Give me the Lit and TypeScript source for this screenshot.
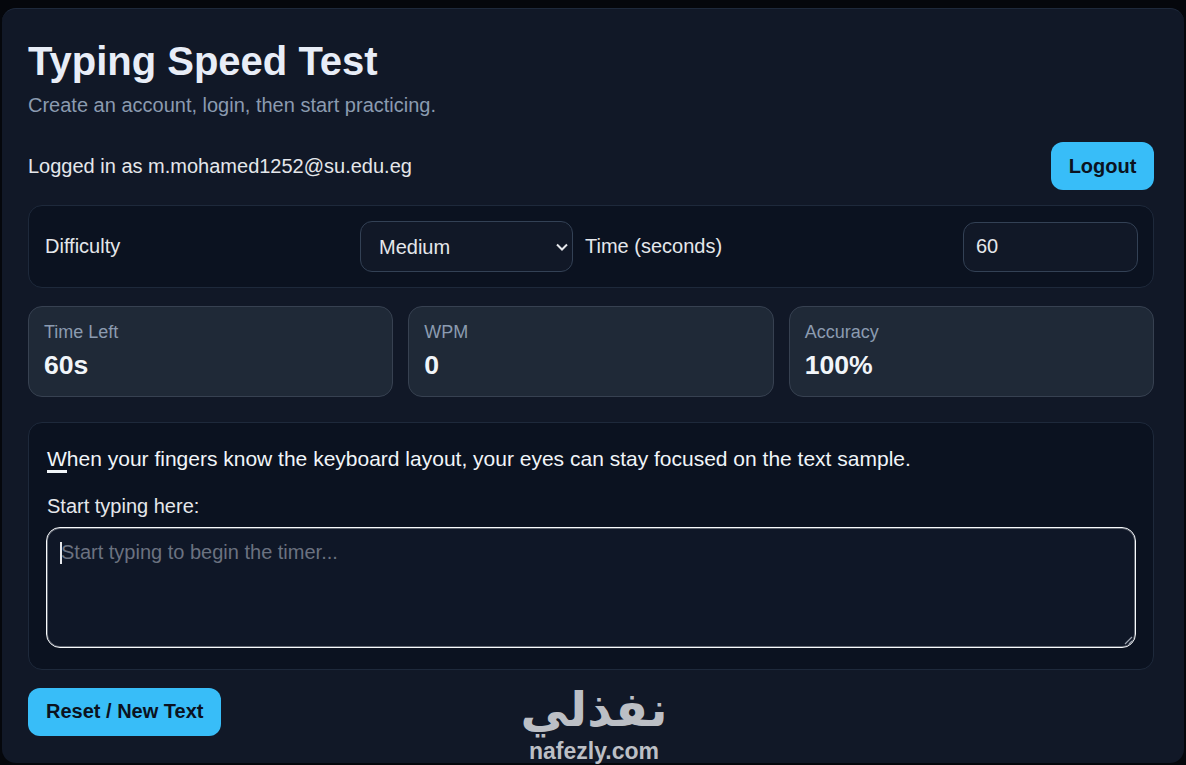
import { LitElement, html, css } from 'lit';
import { customElement, state } from 'lit/decorators.js';

@customElement('app-root')
export class AppRoot extends LitElement {
  @state() private sample = 'When your fingers know the keyboard layout, your eyes can stay focused on the text sample.';

  static styles = css`
    :host {
      display: block;
      height: 765px;
      box-sizing: border-box;
      padding: 8px 2px 2px;
      background: #05070c;
      color-scheme: dark;
      font-family: 'Liberation Sans', Arial, sans-serif;
      color: #e5e7eb;
      overflow: hidden;
    }
    * { box-sizing: border-box; }

    .card {
      position: relative;
      height: 755px;
      padding: 30px 30px 0 26px;
      background: #111827;
      border-top: 1px solid #1e293b;
      border-radius: 14px;
    }
    h1 {
      margin: 0;
      font-size: 40px;
      line-height: 44px;
      font-weight: 700;
      color: #e8edf7;
    }
    .subtitle {
      margin: 10px 0 0;
      font-size: 20px;
      line-height: 24px;
      color: #8b9bb0;
    }
    .user-row {
      display: flex;
      justify-content: space-between;
      align-items: center;
      margin-top: 25px;
      font-size: 20px;
    }
    button {
      height: 48px;
      padding: 0 18px;
      border: 0;
      border-radius: 12px;
      background: #38bdf8;
      color: #0b1220;
      font: 700 20px 'Liberation Sans', Arial, sans-serif;
    }
    .logout { width: 103px; padding: 0; }

    .settings {
      display: grid;
      grid-template-columns: 303px 213px 366px 175px;
      gap: 12px;
      align-items: center;
      height: 83px;
      margin-top: 15px;
      padding: 0 16px;
      background: #0b1220;
      border: 1px solid #1e293b;
      border-radius: 14px;
      font-size: 20px;
    }
    .select-wrap { position: relative; }
    .select-wrap svg {
      position: absolute;
      right: 5px;
      top: 22px;
      width: 12px;
      height: 8px;
      pointer-events: none;
    }
    select, input {
      display: block;
      height: 51px;
      width: 100%;
      background: #111827;
      border: 1px solid #334155;
      border-radius: 12px;
      color: #e5e7eb;
      font: 20px 'Liberation Sans', Arial, sans-serif;
      padding: 0 18px;
      outline: none;
    }
    select { appearance: none; }
    input { height: 50px; padding: 0 12px 2px; margin-top: 1px; }

    .stats {
      display: grid;
      grid-template-columns: repeat(3, 1fr);
      gap: 15px;
      margin-top: 18px;
    }
    .stat {
      height: 91px;
      padding: 14px 15px 0;
      background: #1f2937;
      border: 1px solid #374151;
      border-radius: 14px;
    }
    .stat-label {
      font-size: 18px;
      line-height: 22px;
      color: #8b9bb0;
    }
    .stat-value {
      margin-top: 6px;
      font-size: 26.6px;
      line-height: 32px;
      font-weight: 700;
      color: #f1f5f9;
    }

    .typing {
      height: 248px;
      margin-top: 25px;
      padding: 24px 18px 0;
      background: #0b1220;
      border: 1px solid #1e293b;
      border-radius: 14px;
    }
    .sample {
      margin: 0;
      font-size: 21px;
      line-height: 24px;
      color: #f1f5f9;
    }
    .current { border-bottom: 3px solid #f1f5f9; }
    label {
      display: block;
      margin-top: 23px;
      font-size: 20px;
      line-height: 24px;
    }
    .field {
      position: relative;
      margin: 9px -1px 0;
    }
    textarea {
      display: block;
      width: 100%;
      height: 121px;
      padding: 13px 14px;
      background: #0f1727;
      border: 1px solid #f8fafc;
      box-shadow: inset 0 0 0 1px rgba(248, 250, 252, 0.35);
      border-radius: 14px;
      color: #e5e7eb;
      font: 20px 'Liberation Sans', Arial, sans-serif;
      outline: none;
      resize: none;
    }
    textarea::placeholder { color: #6b7280; opacity: 1; }
    .caret {
      position: absolute;
      left: 14px;
      top: 15px;
      width: 2px;
      height: 22px;
      background: #e5e7eb;
    }
    .grip {
      position: absolute;
      right: 3px;
      bottom: 3px;
      width: 9px;
      height: 9px;
      pointer-events: none;
    }
    .reset { display: block; margin-top: 18px; padding-bottom: 2px; }

    .watermark {
      position: absolute;
      left: 500px;
      top: 674px;
      width: 184px;
      text-align: center;
      color: #bcbfc5;
      pointer-events: none;
    }
    .watermark-ar {
      font: 700 48px/52px 'DejaVu Sans', sans-serif;
    }
    .watermark-en {
      margin-top: 5px;
      font: 700 23px/22px 'Liberation Sans', sans-serif;
    }
  `;

  render() {
    const first = this.sample[0];
    const rest = this.sample.slice(1);
    return html`
      <div class="card">
        <h1>Typing Speed Test</h1>
        <p class="subtitle">Create an account, login, then start practicing.</p>

        <div class="user-row">
          <span>Logged in as m.mohamed1252@su.edu.eg</span>
          <button class="logout">Logout</button>
        </div>

        <div class="settings">
          <span>Difficulty</span>
          <div class="select-wrap">
            <select>
              <option>Easy</option>
              <option selected>Medium</option>
              <option>Hard</option>
            </select>
            <svg viewBox="0 0 12 8" fill="none" stroke="#e5e7eb" stroke-width="2"><path d="M1 1.5l5 5 5-5" /></svg>
          </div>
          <span>Time (seconds)</span>
          <input type="text" value="60" />
        </div>

        <div class="stats">
          <div class="stat"><div class="stat-label">Time Left</div><div class="stat-value">60s</div></div>
          <div class="stat"><div class="stat-label">WPM</div><div class="stat-value">0</div></div>
          <div class="stat"><div class="stat-label">Accuracy</div><div class="stat-value">100%</div></div>
        </div>

        <div class="typing">
          <p class="sample"><span class="current">${first}</span>${rest}</p>
          <label>Start typing here:</label>
          <div class="field">
            <textarea placeholder="Start typing to begin the timer..."></textarea>
            <span class="caret"></span>
            <svg class="grip" viewBox="0 0 9 9" fill="none" stroke="#9ca3af" stroke-width="1.2"><path d="M1 8l7-7M5 8l3-3" /></svg>
          </div>
        </div>

        <button class="reset">Reset / New Text</button>

        <div class="watermark">
          <div class="watermark-ar" dir="rtl">نفذلي</div>
          <div class="watermark-en">nafezly.com</div>
        </div>
      </div>
    `;
  }
}
